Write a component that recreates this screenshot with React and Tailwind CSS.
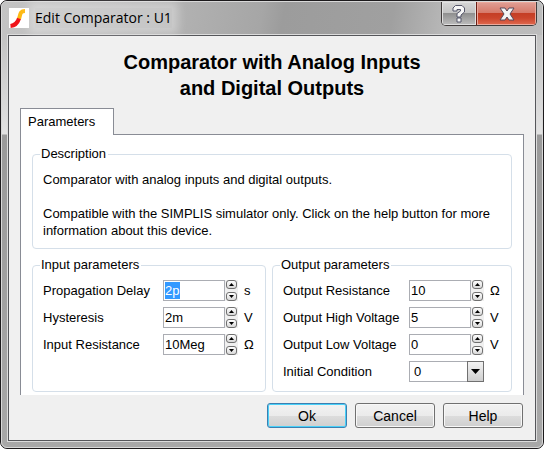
import React, { useState } from 'react'

function GroupBox({ title, children }) {
  return (
    <fieldset className="min-w-0 rounded-[4px] border border-[#d5dfe9] pl-[7px] pr-2">
      <legend className="pl-px pr-0.5 leading-4">{title}</legend>
      {children}
    </fieldset>
  )
}

function SpinButton({ label, up, onClick }) {
  return (
    <button
      type="button"
      aria-label={label}
      onClick={onClick}
      className="flex h-[9px] w-[11px] items-center justify-center rounded-[3px] border border-[#707070] bg-gradient-to-b from-white to-[#d8d8d8]"
    >
      <svg width="5" height="3" viewBox="0 0 5 3" fill="#000">
        <path d={up ? 'M2.5 0 L5 3 H0 Z' : 'M0 0 H5 L2.5 3 Z'} />
      </svg>
    </button>
  )
}

function SpinField({ id, label, unit, initial, selected }) {
  const [value, setValue] = useState(initial)

  // Step the number and keep the suffix (2p -> 3p)
  const step = (amount) => {
    const suffix = value.replace(/^[-\d.]+/, '')
    setValue(`${(parseFloat(value) || 0) + amount}${suffix}`)
  }

  return (
    <>
      <label htmlFor={id} className="whitespace-nowrap">{label}</label>
      <div className="flex h-[21px] items-center">
        <div className="flex h-full w-[62px] items-center border border-[#abadb3] bg-white pl-px">
          <input
            id={id}
            type="text"
            value={value}
            onChange={(e) => setValue(e.target.value)}
            className={`outline-none ${selected ? 'h-[17px] w-[15px] bg-[#3399ff] text-white' : 'h-4 w-full'}`}
          />
        </div>
        <div className="flex h-full w-[13px] flex-col items-center justify-between bg-[#f0f0f0]">
          <SpinButton label={`Increase ${label}`} up onClick={() => step(1)} />
          <SpinButton label={`Decrease ${label}`} onClick={() => step(-1)} />
        </div>
        <span className="pl-1.5">{unit}</span>
      </div>
    </>
  )
}

function DialogButton({ children, primary }) {
  return (
    <button
      type="button"
      className={`h-[25px] w-20 rounded-[3px] border bg-[linear-gradient(#f2f2f2,#ebebeb_50%,#dddddd_50%,#cfcfcf)] text-sm ${
        primary
          ? 'border-[#3c7fb1] shadow-[inset_0_0_0_1px_#48d0f8]'
          : 'border-[#707070] shadow-[inset_0_0_0_1px_#f8f8f8]'
      }`}
    >
      {children}
    </button>
  )
}

function TitleBar() {
  return (
    <header className="flex h-[33px] items-start justify-between rounded-t-[6px] bg-[linear-gradient(100deg,#c4c4c4,#b0b0b0_35%,#a6a6a6_48%,#9c9c9c_52%,#a0a0a0_72%,#b8b8b8_82%,#bcbcbc)] pl-[7px] pr-[5px]">
      <div className="flex items-center pt-1.5">
        <svg width="20" height="20" viewBox="0 0 20 20" className="bg-white" fill="none" strokeWidth="4">
          <path d="M16 3 C10.500 3 11.500 7 10 11" stroke="#fdb913" />
          <path d="M10 10.500 C8.500 15 6.500 17.500 1.500 18" stroke="#f0141a" />
        </svg>
        <h1 className="ml-1.5 bg-white/25 font-['Open_Sans',sans-serif] text-sm leading-5 shadow-[0_0_10px_6px_rgba(255,255,255,0.35)]">
          Edit Comparator : U1
        </h1>
      </div>
      <div className="flex h-6 overflow-hidden rounded-b-[5px] border border-t-0 border-[#403c3c]">
        <button
          type="button"
          aria-label="Help"
          className="flex w-[34px] items-center justify-center bg-[linear-gradient(#d6d6d6,#c2c2c2_48%,#8e8e8e_48%,#bdbdbd)] shadow-[inset_0_0_0_1px_#e0e0e0]"
        >
          <svg width="14" height="18" viewBox="0 0 14 18" fill="none">
            <path d="M1 6 V3 L3.500 .5 H10 L12.500 3 V7 L9 10 V12 H5 V8.500 L8.500 6 V4.500 H5 V6 Z M5 13 H9 V17 H5 Z" fill="#f6f6f6" stroke="#55566a" />
          </svg>
        </button>
        <button
          type="button"
          aria-label="Close"
          className="flex w-[60px] items-center justify-center border-l border-[#6b1d14] bg-[linear-gradient(#e0a096,#d67868_48%,#c43d24_48%,#cb452c_70%,#e06a50)] shadow-[inset_0_0_0_1px_#eba99c]"
        >
          <svg width="16" height="14" viewBox="0 0 16 14">
            <path d="M1 1 H6 L8 4 L10 1 H15 L11 7 L15 13 H10 L8 10 L6 13 H1 L5 7 Z" fill="#f4f4f4" stroke="#54485a" />
          </svg>
        </button>
      </div>
    </header>
  )
}

function App() {
  const [condition, setCondition] = useState('0')

  return (
    <div className="min-h-screen rounded-[7px] border border-[#1c1a1c] bg-[linear-gradient(#b8b8b8,#e2e2e2_133px,#9a9a9a_134px,#a8a8a8)] font-['Liberation_Sans',Arial,sans-serif] text-[13px] leading-[17px] text-black">
      <div className="rounded-[6px] border border-[#d8d8d8] px-[6px] pb-[6px]">
        <div className="-mx-[6px]">
          <TitleBar />
        </div>
        <main className="border border-[#55565a] bg-[#f0f0f0] px-[11px] pb-3 outline-1 outline-[#dcdcdc]">
          <h2 className="pt-[13px] text-center text-[20px] font-bold leading-[26px]">
            Comparator with Analog Inputs
            <br />
            and Digital Outputs
          </h2>

          <div role="tablist" className="mt-[7px] flex">
            <button
              type="button"
              role="tab"
              aria-selected="true"
              className="relative z-10 -mb-px h-[27px] w-[94px] border border-b-0 border-[#898c95] bg-white pb-0.5 pl-[7px] text-left"
            >
              Parameters
            </button>
          </div>

          <div role="tabpanel" className="border border-b-0 border-[#898c95] bg-white px-[11px] pb-[3px] pt-[11px]">
            <GroupBox title="Description">
              <p className="pl-[3px] pt-[9px]">Comparator with analog inputs and digital outputs.</p>
              <p className="pb-[9px] pl-[3px] pt-[17px]">
                Compatible with the SIMPLIS simulator only. Click on the help button for more information about this device.
              </p>
            </GroupBox>

            <div className="mt-2 grid grid-cols-[234fr_240fr] gap-1.5">
              <GroupBox title="Input parameters">
                <div className="grid grid-cols-[120px_1fr] items-center gap-y-1.5 pb-[9px] pl-[3px] pt-[7px]">
                  <SpinField id="delay" label="Propagation Delay" unit="s" initial="2p" selected />
                  <SpinField id="hysteresis" label="Hysteresis" unit="V" initial="2m" />
                  <SpinField id="input-resistance" label="Input Resistance" unit="Ω" initial="10Meg" />
                </div>
              </GroupBox>

              <GroupBox title="Output parameters">
                <div className="grid grid-cols-[126px_1fr] items-center gap-y-1.5 pb-[9px] pl-[3px] pt-[7px]">
                  <SpinField id="output-resistance" label="Output Resistance" unit="Ω" initial="10" />
                  <SpinField id="output-high" label="Output High Voltage" unit="V" initial="5" />
                  <SpinField id="output-low" label="Output Low Voltage" unit="V" initial="0" />
                  <label htmlFor="condition">Initial Condition</label>
                  <div className="relative h-[21px] w-[75px]">
                    <select
                      id="condition"
                      value={condition}
                      onChange={(e) => setCondition(e.target.value)}
                      className="h-full w-full appearance-none border border-[#abadb3] bg-white pl-1"
                    >
                      <option>0</option>
                      <option>1</option>
                    </select>
                    <span className="pointer-events-none absolute inset-y-0 right-0 flex w-[17px] items-center justify-center border border-[#707070] bg-gradient-to-b from-[#f2f2f2] to-[#cfcfcf]">
                      <svg width="9" height="5" viewBox="0 0 9 5">
                        <path d="M0 0 H9 L4.500 5 Z" fill="#000" />
                      </svg>
                    </span>
                  </div>
                </div>
              </GroupBox>
            </div>
          </div>

          <footer className="flex justify-end gap-2 pr-px pt-2">
            <DialogButton primary>Ok</DialogButton>
            <DialogButton>Cancel</DialogButton>
            <DialogButton>Help</DialogButton>
          </footer>
        </main>
      </div>
    </div>
  )
}

export default App
